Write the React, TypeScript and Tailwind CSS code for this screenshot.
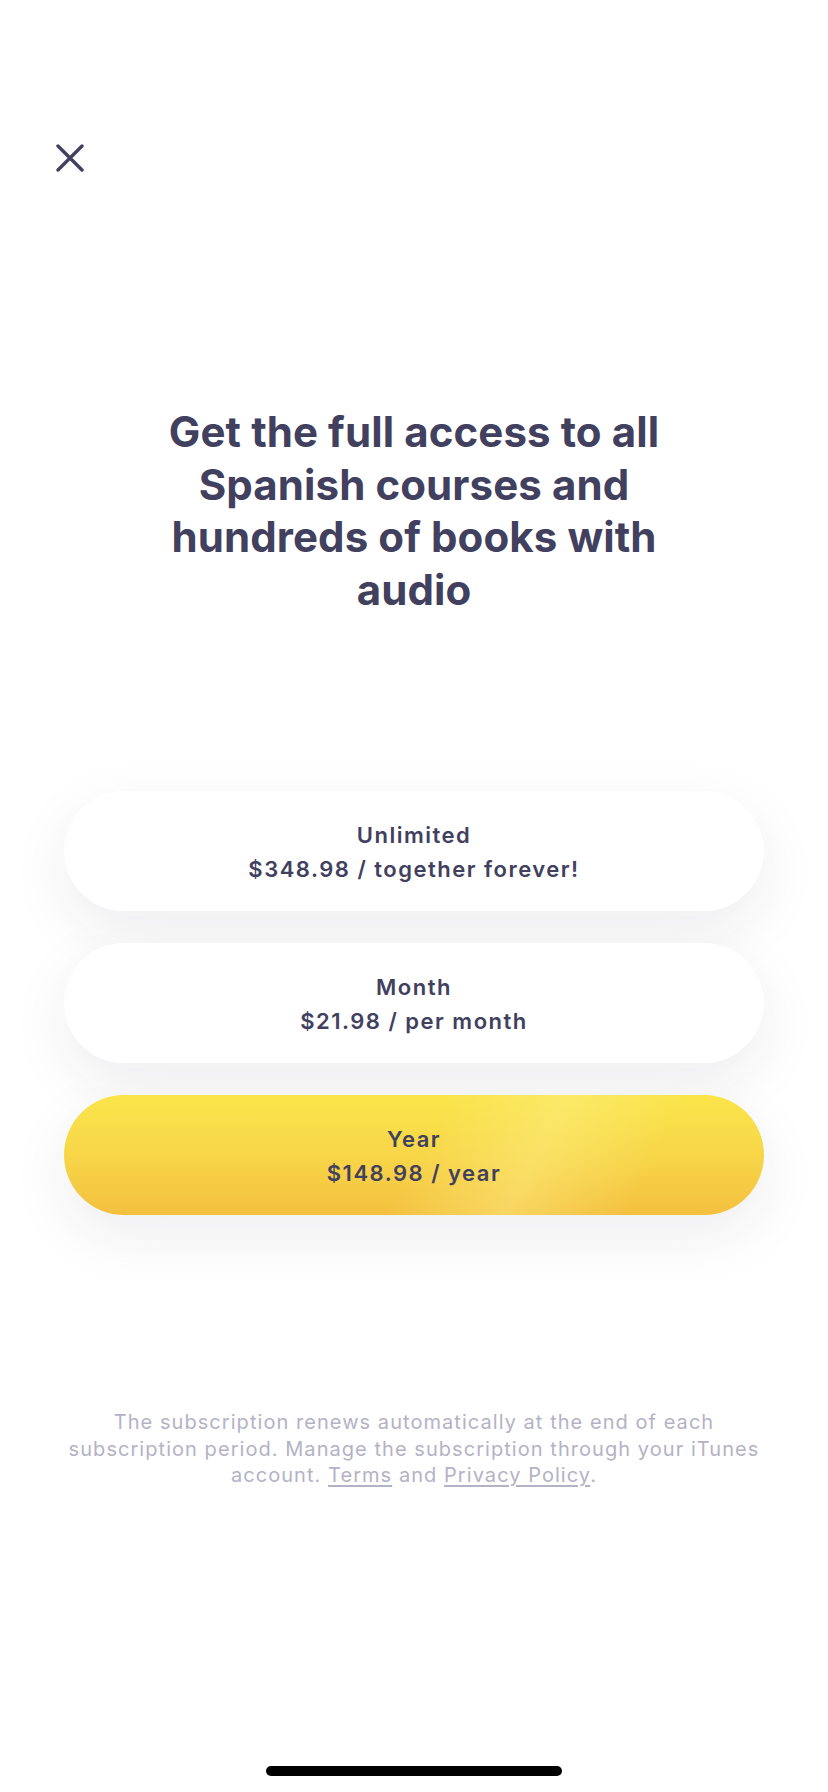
import React from "react";

const plans = [
  { title: "Unlimited", price: "$348.98 / together forever!", active: false },
  { title: "Month", price: "$21.98 / per month", active: false },
  { title: "Year", price: "$148.98 / year", active: true },
];

export default function App() {
  return (
    <div className="w-[828px] h-[1792px] bg-white flex flex-col font-['Inter',sans-serif] text-[#41405E] overflow-hidden">
      <div className="pt-[144px] pl-[56px] h-[406px]">
        <button className="w-[28px] h-[28px]" aria-label="Close">
          <svg width="28" height="28" viewBox="0 0 28 28" fill="none">
            <path d="M2 2L26 26M26 2L2 26" stroke="#43425E" strokeWidth="3.4" strokeLinecap="round" />
          </svg>
        </button>
      </div>
      <h1 className="text-center text-[42px] leading-[52.5px] font-bold tracking-[0.1px]">
        Get the full access to all
        <br />
        Spanish courses and
        <br />
        hundreds of books with
        <br />
        audio
      </h1>
      <div className="mt-[175px] flex flex-col gap-[32px] px-[64px]">
        {plans.map((p) => (
          <div
            key={p.title}
            className={
              p.active
                ? "h-[120px] pt-[3px] rounded-full flex flex-col items-center justify-center shadow-[0_20px_60px_rgba(40,40,70,0.08)] bg-[linear-gradient(118deg,rgba(255,248,160,0)_50%,rgba(253,240,140,0.45)_66%,rgba(255,248,160,0)_82%),linear-gradient(180deg,#FAE54A_0%,#F7D447_55%,#F4C03F_100%)]"
                : "h-[120px] pt-[3px] rounded-full bg-white flex flex-col items-center justify-center shadow-[0_20px_60px_rgba(40,40,70,0.08)]"
            }
          >
            <div className="text-[22px] leading-[34px] font-semibold tracking-[1.5px]">{p.title}</div>
            <div className="text-[22px] leading-[35px] font-semibold tracking-[1.5px]">{p.price}</div>
          </div>
        ))}
      </div>
      <p className="mt-[194px] px-[50px] text-center text-[20px] leading-[26.5px] text-[#B4B2C5] tracking-[1.05px]">
        The subscription renews automatically at the end of each
        <br />
        subscription period. Manage the subscription through your iTunes
        <br />
        account. <span className="underline underline-offset-[3px]">Terms</span> and{" "}
        <span className="underline underline-offset-[3px]">Privacy Policy</span>.
      </p>
      <div className="flex-1" />
      <div className="flex justify-center pb-[16px]">
        <div className="w-[296px] h-[10px] rounded-full bg-black" />
      </div>
    </div>
  );
}
